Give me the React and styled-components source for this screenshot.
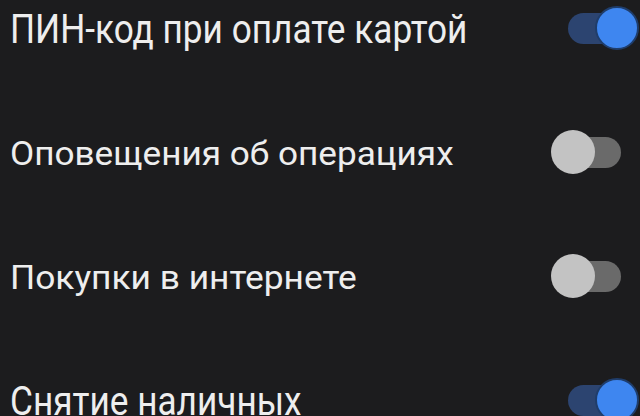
import { useState } from "react";
import styled, { createGlobalStyle } from "styled-components";

const GlobalStyle = createGlobalStyle`
  html, body {
    margin: 0;
    background: #1c1c1e;
    overflow: hidden;
  }
  body {
    font-family: Roboto, "Noto Sans", sans-serif;
  }
`;

const Screen = styled.div`
  width: 640px;
  height: 416px;
  overflow: hidden;
`;

const List = styled.div`
  display: flex;
  flex-direction: column;
  margin-top: -33px;
`;

const Row = styled.div`
  height: 124px;
  flex-shrink: 0;
  display: flex;
  align-items: center;
  justify-content: space-between;
  padding-left: 10px;
`;

const Label = styled.span`
  color: #eeeeee;
  font-size: ${(p) => p.$size}px;
  font-weight: 400;
  white-space: nowrap;
  display: inline-block;
  transform-origin: left center;
  transform: scaleX(${(p) => p.$stretch});
`;

const Switch = styled.button`
  position: relative;
  width: 88px;
  height: 46px;
  margin-right: 1px;
  padding: 0;
  border: none;
  background: none;
  cursor: pointer;
`;

const Track = styled.span`
  position: absolute;
  top: 7px;
  left: ${(p) => (p.$on ? 17 : 7)}px;
  width: 63px;
  height: 31px;
  border-radius: 16px;
  background: ${(p) => (p.$on ? "#2c4470" : "#6a6a6a")};
`;

const Knob = styled.span`
  position: absolute;
  top: 0;
  left: ${(p) => (p.$on ? 44 : 0)}px;
  width: 44px;
  height: 44px;
  box-sizing: border-box;
  border-radius: 50%;
  background: ${(p) => (p.$on ? "#3e86f0" : "#c3c3c3")};
  border: ${(p) => (p.$on ? "2px solid #1f3d6b" : "none")};
`;

const items = [
  { text: "ПИН-код при оплате картой", on: true, size: 40, stretch: 0.88 },
  { text: "Оповещения об операциях", on: false, size: 33, stretch: 1.065 },
  { text: "Покупки в интернете", on: false, size: 33, stretch: 1.07 },
  { text: "Снятие наличных", on: true, size: 40, stretch: 0.88 },
];

export default function App() {
  const [state, setState] = useState(items.map((i) => i.on));

  const toggle = (idx) =>
    setState((s) => s.map((v, i) => (i === idx ? !v : v)));

  return (
    <>
      <GlobalStyle />
      <Screen>
        <List>
          {items.map((item, idx) => (
            <Row key={item.text}>
              <Label $size={item.size} $stretch={item.stretch}>
                {item.text}
              </Label>
              <Switch onClick={() => toggle(idx)}>
                <Track $on={state[idx]} />
                <Knob $on={state[idx]} />
              </Switch>
            </Row>
          ))}
        </List>
      </Screen>
    </>
  );
}
